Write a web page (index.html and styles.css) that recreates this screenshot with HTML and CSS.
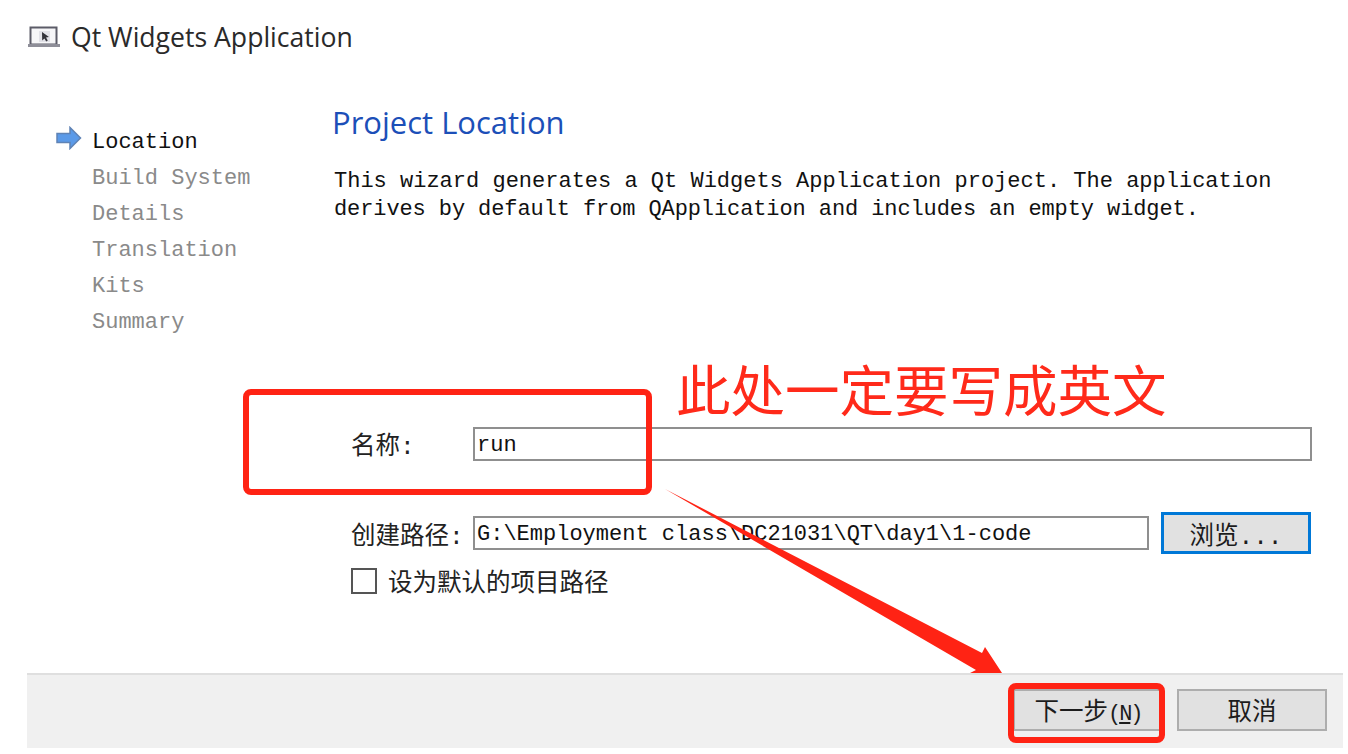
FILE: index.html
```html
<!DOCTYPE html>
<html lang="zh-CN">
<head>
    <meta charset="UTF-8">
    <title>Qt Widgets Application</title>
    <link rel="stylesheet" href="styles.css">
</head>
<body>

<div class="wizard">
    <div class="title-bar">
        <svg class="app-icon" width="34" height="24" viewBox="0 0 34 24">
            <rect x="3.5" y="2.5" width="26" height="17" fill="#f6f6f8" stroke="#5c5c68" stroke-width="2"/>
            <rect x="12" y="6" width="11" height="11" fill="#e2e2e8"/>
            <path d="M1 20.5h32" stroke="#8e8e98" stroke-width="3"/>
            <path d="M15 7l7 5-3 .6 1.8 3-1.6.9-1.8-3-2.2 2z" fill="#33333a"/>
        </svg>
        <span class="title-text">Qt Widgets Application</span>
    </div>

    <div class="wizard-body">
        <ul class="steps">
            <li class="step current">
                <svg class="step-arrow" width="28" height="24" viewBox="0 0 28 24">
                    <path d="M2 7.5h13V1.5L25.5 12 15 22.5v-6H2z" fill="#5b9ae8" stroke="#5f83b5" stroke-width="1.5"/>
                </svg>
                Location
            </li>
            <li class="step">Build System</li>
            <li class="step">Details</li>
            <li class="step">Translation</li>
            <li class="step">Kits</li>
            <li class="step">Summary</li>
        </ul>

        <div class="content">
            <h1 class="page-title">Project Location</h1>
            <p class="intro">This wizard generates a Qt Widgets Application project. The application<br><span class="intro-tail">derives by default from QApplication and includes an empty widget.</span></p>

            <div class="form">
                <div class="form-row name-row">
                    <label class="form-label">名称:</label>
                    <div class="text-field name-field">run</div>
                </div>
                <div class="form-row path-row">
                    <label class="form-label">创建路径:</label>
                    <div class="text-field path-field">G:\Employment class\DC21031\QT\day1\1-code</div>
                    <button class="btn browse-btn">浏览...</button>
                </div>
                <div class="check-row">
                    <span class="check-box"></span>
                    <span class="check-label">设为默认的项目路径</span>
                </div>
            </div>
        </div>
    </div>

    <div class="footer">
        <button class="btn next-btn">下一步<span class="mnemonic">(<u>N</u>)</span></button>
        <button class="btn cancel-btn">取消</button>
    </div>
</div>

<!-- red markup drawn on top of the screenshot -->
<div class="note-text">此处一定要写成英文</div>
<div class="note-box name-box"></div>
<div class="note-box next-box"></div>
<svg class="note-arrow" width="1348" height="754" viewBox="0 0 1348 754">
    <path d="M665 489L982 653L985 647L1002 673L970 673L976 670Z" fill="#ff2314"/>
</svg>

</body>
</html>
```

FILE: styles.css
```css
html, body { margin: 0; padding: 0; height: 100%; background: #fff; overflow: hidden; }
body { position: relative; font-family: "Liberation Mono", "Noto Sans CJK SC", monospace; color: #1c1c1c; }

.wizard { display: flex; flex-direction: column; width: 1316px; height: 748px; margin-left: 27px; }

.title-bar { display: flex; align-items: center; gap: 10px; height: 74px; flex: none; }
.app-icon { flex: none; }
.title-text { font-family: "Open Sans", "Liberation Sans", sans-serif; font-size: 26.6px; color: #2a2a2a; }

.wizard-body { display: flex; flex: 1; }

.steps { list-style: none; margin: 51px 0 0; padding: 0; width: 305px; flex: none; }
.step { position: relative; height: 36.1px; line-height: 36.1px; padding-left: 65px; font-size: 22px; color: #8a8a8a; }
.step.current { color: #111; }
.step-arrow { position: absolute; left: 28px; top: 1px; }

.content { flex: 1; display: flex; flex-direction: column; }
.page-title { margin: 27px 0 0; font-family: "Open Sans", "Liberation Sans", sans-serif; font-size: 31px; line-height: 42px; font-weight: 400; color: #1c4fb8; }
.intro { margin: 25px 0 0 2px; font-size: 22px; line-height: 28px; color: #111; }
.intro-tail { letter-spacing: -0.1px; }

.form { margin-top: 202px; padding-left: 19px; }
.form-row { display: flex; align-items: center; }
.form-label { width: 122px; flex: none; font-size: 24.5px; color: #222; white-space: nowrap; }
.text-field { box-sizing: border-box; height: 34px; line-height: 33px; padding-left: 2px; border: 2px solid #8f8f8f; background: #fff; font-size: 22px; color: #111; white-space: nowrap; }
.name-row { width: 961px; }
.name-field { flex: 1; }
.path-row { margin-top: 51px; }
.path-field { width: 676px; }

.btn { box-sizing: border-box; font-family: "Liberation Mono", "Noto Sans CJK SC", monospace; background: #e1e1e1; border: 2px solid #adadad; color: #1c1c1c; font-size: 24.5px; padding: 0; }
.browse-btn { width: 150px; height: 42px; margin-left: 12px; border: 3px solid #0078d7; }

.check-row { display: flex; align-items: center; gap: 11px; margin-top: 9px; }
.check-box { box-sizing: border-box; width: 26px; height: 26px; border: 2px solid #555; background: #fff; }
.check-label { font-size: 24.5px; color: #222; }

.footer { display: flex; justify-content: flex-end; align-items: center; gap: 14px; height: 75px; flex: none; box-sizing: border-box; padding: 0 16px 4px 0; background: #f0f0f0; border-top: 2px solid #dfdfdf; }
.next-btn, .cancel-btn { width: 150px; height: 42px; }
.mnemonic { font-size: 22px; letter-spacing: -2px; }

.note-text { position: absolute; left: 676px; top: 350px; font-family: "Noto Sans CJK SC", sans-serif; font-size: 54.5px; line-height: 76px; color: #ff2a1a; white-space: nowrap; }
.note-box { position: absolute; box-sizing: border-box; border: 6px solid #ff2314; border-radius: 8px; }
.name-box { left: 243px; top: 389px; width: 409px; height: 106px; }
.next-box { left: 1008px; top: 683px; width: 157px; height: 60px; }
.note-arrow { position: absolute; left: 0; top: 0; pointer-events: none; }
```
